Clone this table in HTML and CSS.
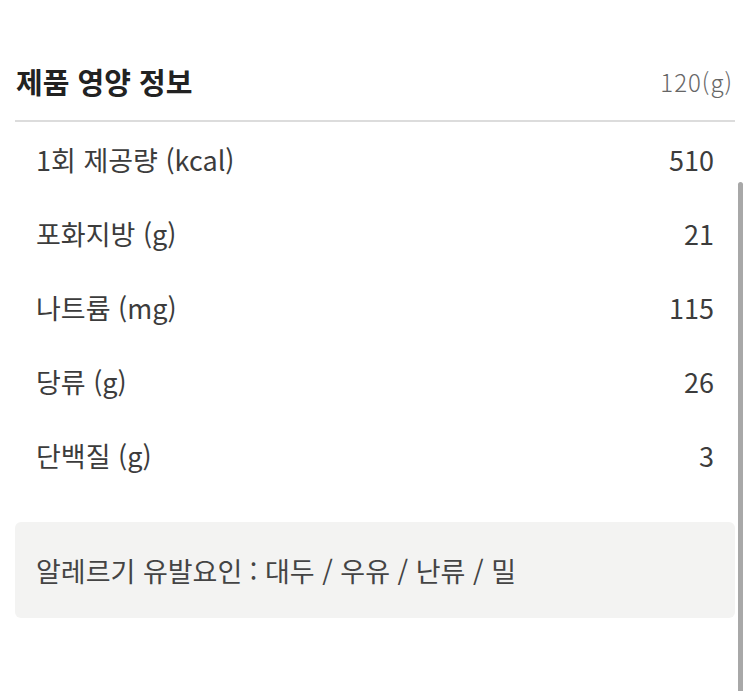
FILE: index.html
```html
<!DOCTYPE html>
<html lang="ko">
<head>
<meta charset="utf-8">
<link rel="stylesheet" href="styles.css">
</head>
<body>
<div class="page">
  <div class="header">
    <h1 class="title">제품 영양 정보</h1>
    <span class="weight">120(g)</span>
  </div>
  <ul class="rows">
    <li class="row"><span>1회 제공량 (kcal)</span><span>510</span></li>
    <li class="row"><span>포화지방 (g)</span><span>21</span></li>
    <li class="row"><span>나트륨 (mg)</span><span>115</span></li>
    <li class="row"><span>당류 (g)</span><span>26</span></li>
    <li class="row"><span>단백질 (g)</span><span>3</span></li>
  </ul>
  <div class="allergy">알레르기 유발요인 : 대두 / 우유 / 난류 / 밀</div>
</div>
<div class="scrollbar"></div>
</body>
</html>
```
FILE: styles.css
```css
html, body {
  margin: 0;
  padding: 0;
  background: #fff;
}
body {
  font-family: "Noto Sans CJK KR", "Noto Sans", sans-serif;
  color: #333;
  width: 750px;
  height: 691px;
  overflow: hidden;
  position: relative;
}
.page {
  padding: 58px 15px 0 15px;
}
.header {
  display: flex;
  justify-content: space-between;
  align-items: center;
  padding: 0 2px 16px 1px;
  height: 46px;
  border-bottom: 2px solid #dcdcdc;
}
.title {
  margin: 0;
  font-size: 29px;
  font-weight: 700;
  color: #222;
}
.weight {
  font-size: 24px;
  color: #666;
  font-weight: 300;
  letter-spacing: 1px;
}
.rows {
  list-style: none;
  margin: 0;
  padding: 0 21px 0 21px;
}
.row {
  display: flex;
  justify-content: space-between;
  align-items: center;
  height: 74px;
  font-size: 27px;
  color: #3c3c3c;
}
.allergy {
  margin-top: 30px;
  background: #f3f3f2;
  border-radius: 6px;
  height: 96px;
  display: flex;
  align-items: center;
  padding: 0 21px;
  font-size: 27px;
  color: #444;
}
.scrollbar {
  position: absolute;
  left: 738px;
  top: 182px;
  width: 5px;
  height: 520px;
  border-radius: 3px;
  background: #a8a8a8;
}
```
